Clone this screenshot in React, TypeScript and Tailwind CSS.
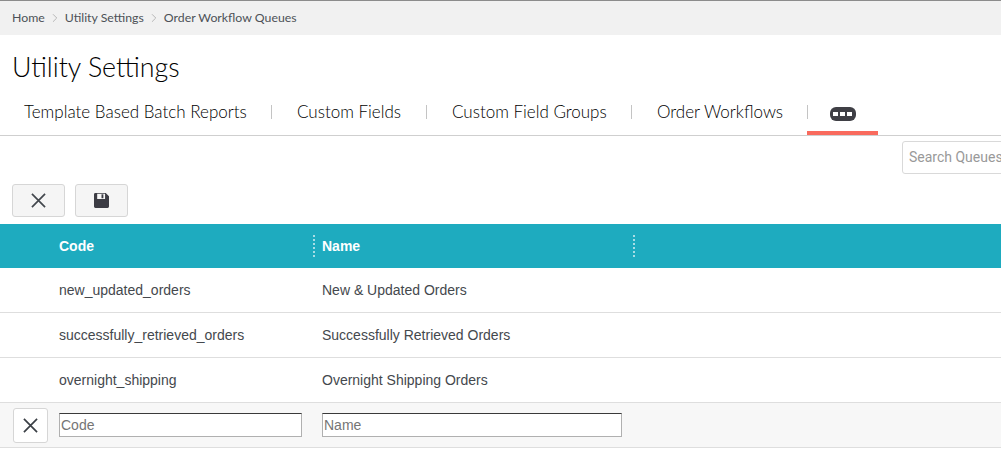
import React from "react";
import { ChevronRight } from "lucide-react";

const museo = "font-['Lato',sans-serif]";
const arial = "font-['Liberation_Sans',Arial,sans-serif]";

function Cross({ className }: { className: string }) {
  return (
    <svg viewBox="0 0 16 16" className={className} fill="none" stroke="currentColor" strokeWidth="1.8">
      <path d="M1 1 L15 15 M15 1 L1 15" />
    </svg>
  );
}

function Save() {
  return (
    <svg viewBox="0 0 16 16" className="h-[15px] w-[15px] text-[#3c3c44]">
      <path
        fill="currentColor"
        d="M1.5 0 H12.5 L16 3.5 V14.5 A1.5 1.5 0 0 1 14.5 16 H1.5 A1.5 1.5 0 0 1 0 14.5 V1.5 A1.5 1.5 0 0 1 1.5 0 Z"
      />
      <rect x="3.4" y="0.8" width="8.4" height="5.6" fill="#f7f7f7" />
      <rect x="8" y="1.4" width="2" height="4.2" fill="#3c3c44" />
    </svg>
  );
}

const tabs = [
  { t: "Template Based Batch Reports", c: "w-[271px] pl-[24px]" },
  { t: "Custom Fields", c: "w-[154px] pl-[25px]" },
  { t: "Custom Field Groups", c: "w-[204px] pl-[25px]" },
  { t: "Order Workflows", c: "w-[175px] pl-[25px]" },
];
const rows = [
  ["new_updated_orders", "New & Updated Orders"],
  ["successfully_retrieved_orders", "Successfully Retrieved Orders"],
  ["overnight_shipping", "Overnight Shipping Orders"],
];

export default function App() {
  return (
    <div className="h-[462px] w-[1001px] overflow-hidden bg-white">
      <div className={`flex h-[35px] items-center gap-[3px] border-t border-[#8c8c8c] bg-[#f1f1f1] pl-3 text-[12.3px] text-[#4d5157] ${museo}`}>
        <span>Home</span>
        <ChevronRight className="h-[14px] w-[14px] text-[#a5a5a5]" strokeWidth={1.3} />
        <span>Utility Settings</span>
        <ChevronRight className="h-[14px] w-[14px] text-[#a5a5a5]" strokeWidth={1.3} />
        <span>Order Workflow Queues</span>
      </div>

      <h1 className={`pl-3 pt-[16px] text-[26.8px] leading-[32px] font-light text-black ${museo}`}>Utility Settings</h1>

      <div className={`mt-[15px] flex h-[38px] items-start border-b border-[#cfcfcf] text-[17px] font-light text-black ${museo}`}>
        {tabs.map(({ t, c }) => (
          <div key={t} className="flex h-[37px] items-start">
            <span className={`pt-[3px] leading-[22px] whitespace-nowrap ${c}`}>{t}</span>
            <span className="mt-[7px] h-[14px] w-px bg-[#c4c4c4]" />
          </div>
        ))}
        <div className="flex h-[37px] w-[71px] -ml-px justify-center border-b-4 border-[#f96a5d] pt-[9px]">
          <div className="flex h-[14px] w-[26px] items-center justify-center gap-[2px] rounded-[6px] bg-[#3f3f45]">
            <span className="h-[4px] w-[5px] bg-white" />
            <span className="h-[4px] w-[5px] bg-white" />
            <span className="h-[4px] w-[5px] bg-white" />
          </div>
        </div>
      </div>

      <div className="flex h-[48px] pt-[5px]">
        <div className="ml-[902px] h-[33px] w-[140px] shrink-0 rounded-[3px] border border-[#d9d9d9] pl-[6px] text-[14px] leading-[31px] whitespace-nowrap text-[#999999] font-['Roboto',sans-serif]">
          Search Queues
        </div>
      </div>

      <div className="flex h-[40px] gap-[10px] pl-3">
        <button className="flex h-[33px] w-[53px] items-center justify-center rounded-[3px] border border-[#d6d6d6] bg-[#f5f5f5] text-[#42474d]">
          <Cross className="h-[15px] w-[15px]" />
        </button>
        <button className="flex h-[33px] w-[53px] items-center justify-center rounded-[3px] border border-[#d6d6d6] bg-[#f5f5f5]">
          <Save />
        </button>
      </div>

      <div className={`flex h-[44px] items-center bg-[#1eabbf] text-[14px] font-bold text-white ${arial}`}>
        <div className="w-[313px] pl-[59px]">Code</div>
        <span className="h-[22px] border-l-2 border-dotted border-[#a9dde5]" />
        <div className="w-[318px] pl-[7px]">Name</div>
        <span className="h-[22px] border-l-2 border-dotted border-[#a9dde5]" />
      </div>

      {rows.map(([c, n]) => (
        <div key={c} className={`flex h-[45px] items-center border-b border-[#dedede] text-[14px] text-[#44484d] ${arial}`}>
          <div className="w-[322px] pl-[59px]">{c}</div>
          <div>{n}</div>
        </div>
      ))}

      <div className={`flex h-[45px] items-center border-b border-[#dedede] bg-[#f7f7f7] text-[14px] ${arial}`}>
        <button className="ml-[13px] flex h-[35px] w-[35px] items-center justify-center rounded-[3px] border border-[#d6d6d6] bg-white text-[#3a3f45]">
          <Cross className="h-[15px] w-[15px]" />
        </button>
        <input
          placeholder="Code"
          className={`ml-[11px] h-[24px] w-[243px] border border-[#b0b0b0] border-t-[#3a3a3a] bg-white px-[1px] text-[14px] outline-none placeholder:text-[#757575] ${arial}`}
        />
        <input
          placeholder="Name"
          className={`ml-[20px] h-[24px] w-[300px] border border-[#b0b0b0] border-t-[#3a3a3a] bg-white px-[1px] text-[14px] outline-none placeholder:text-[#757575] ${arial}`}
        />
      </div>
    </div>
  );
}
